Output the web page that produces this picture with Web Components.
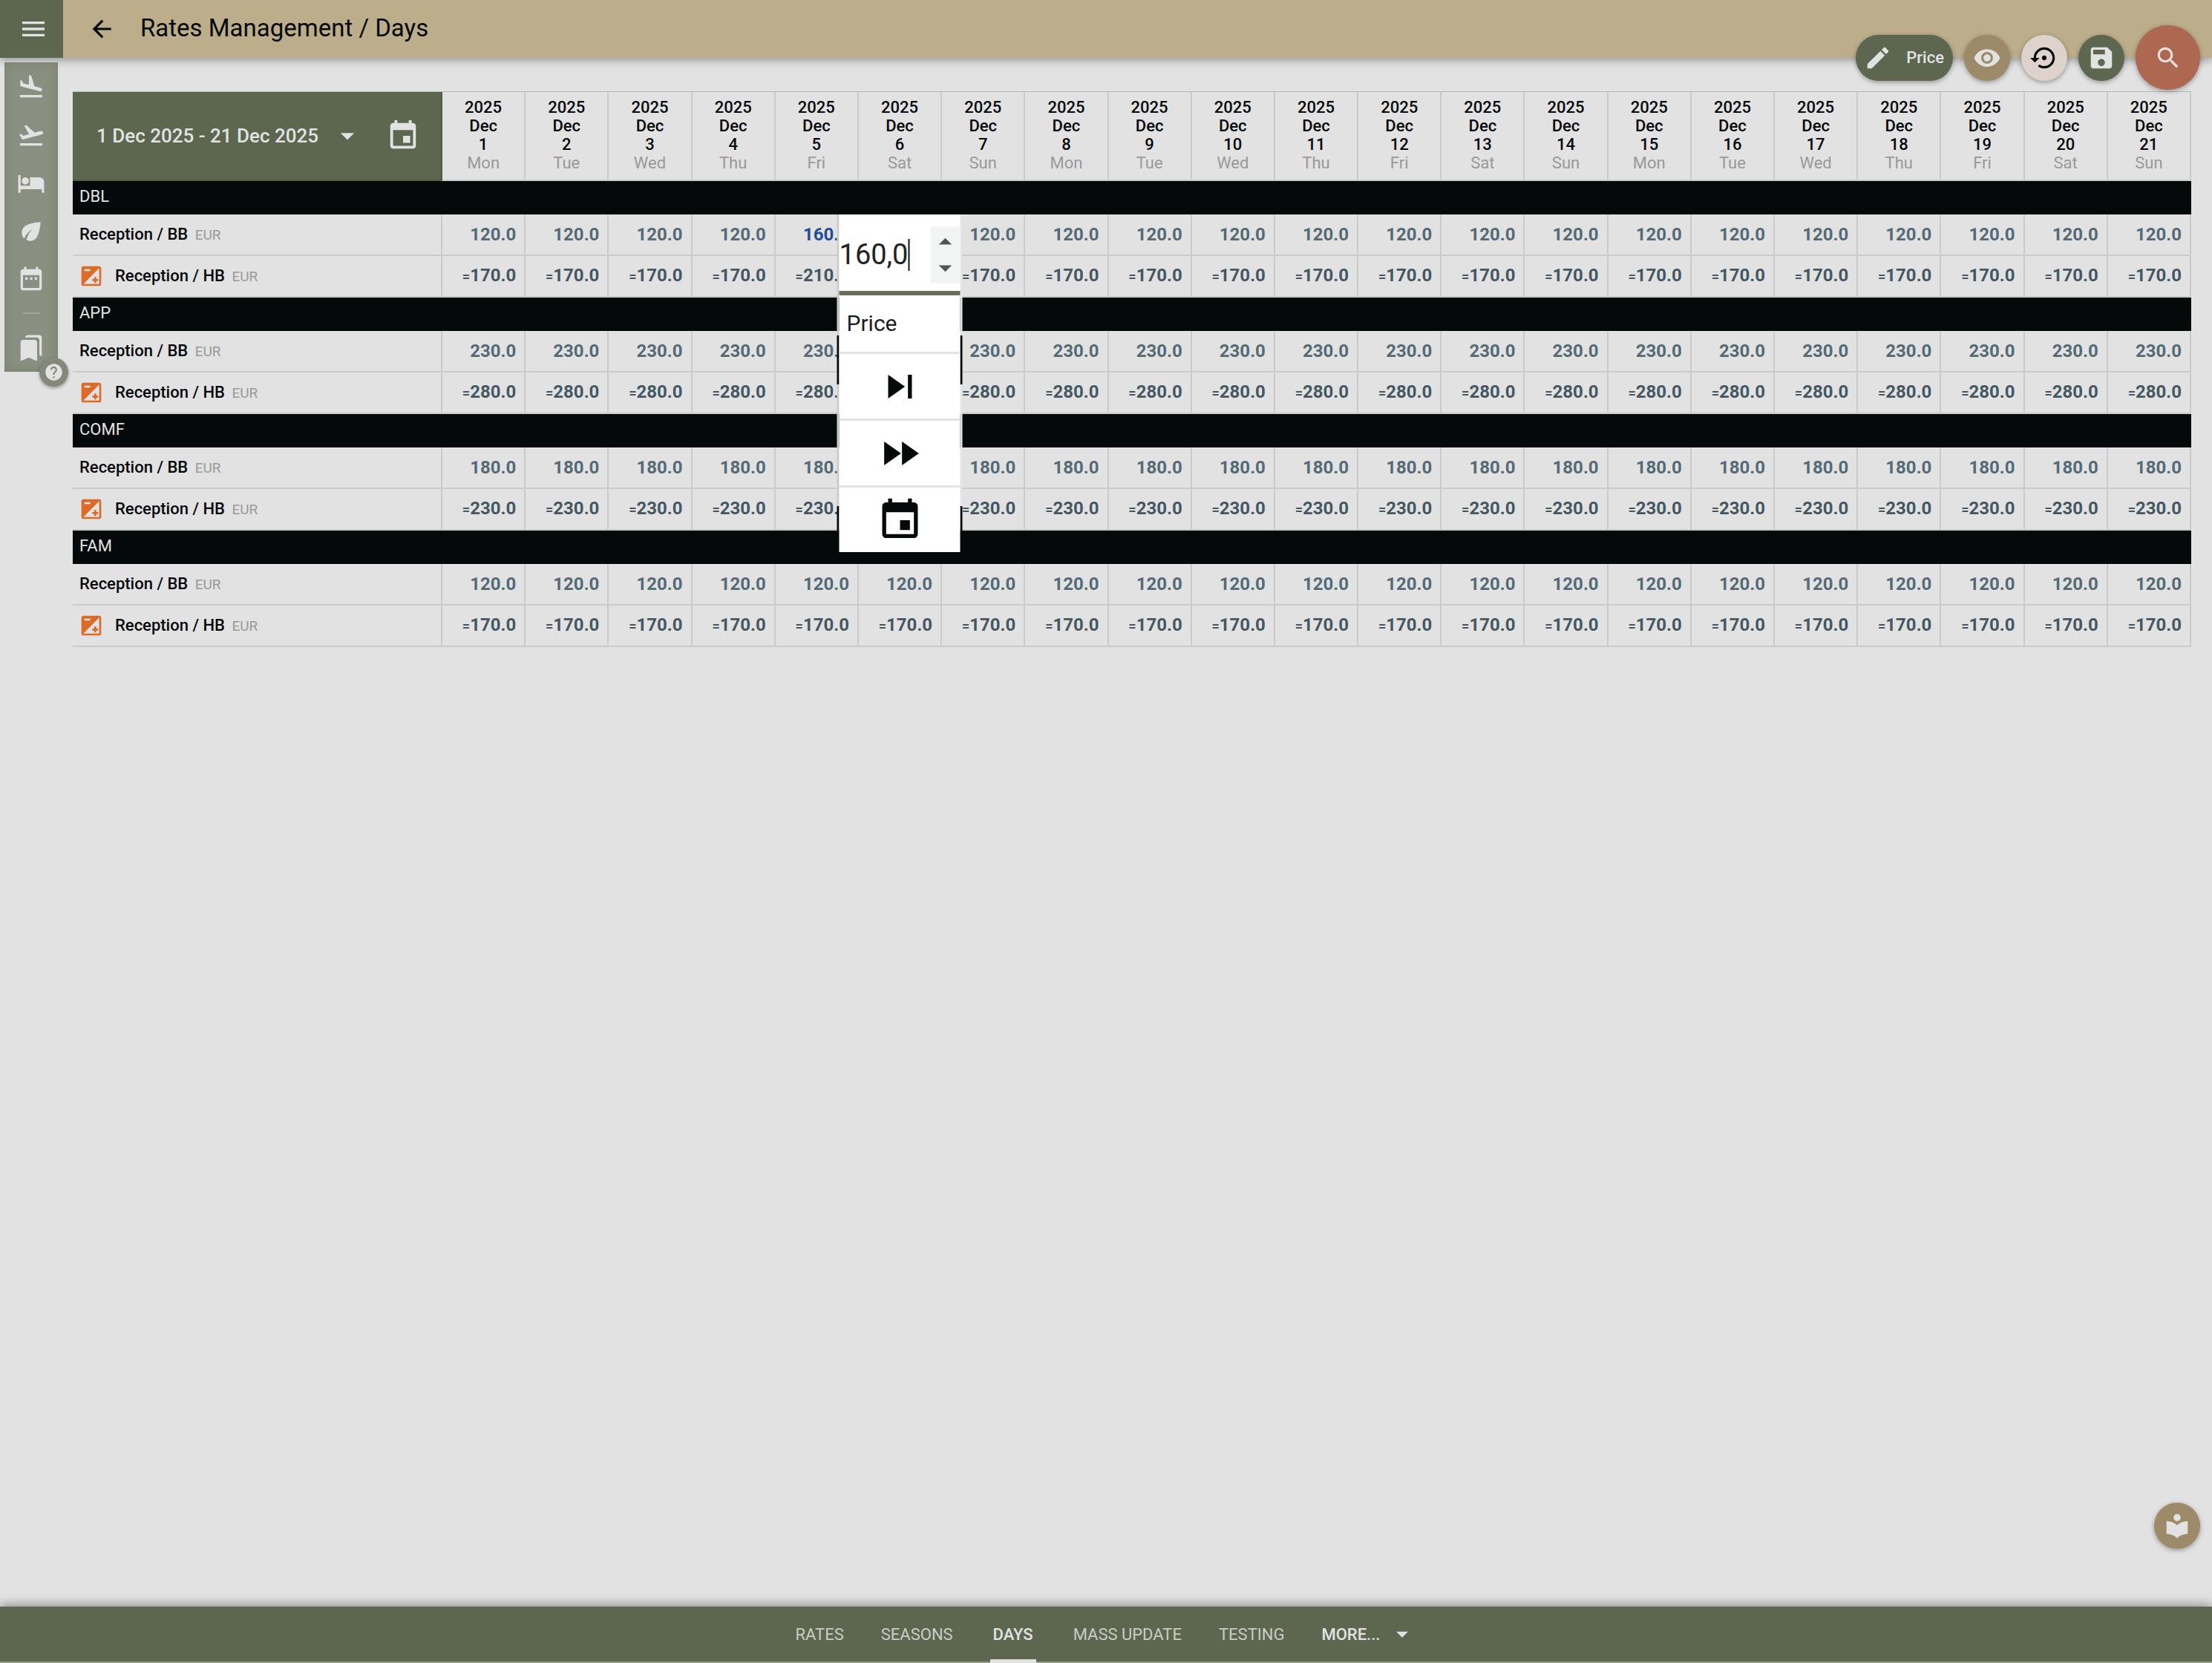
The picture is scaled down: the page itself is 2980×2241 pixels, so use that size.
<!DOCTYPE html>
<html lang="en">
<head>
<meta charset="utf-8">
<title>Rates Management / Days</title>
<style>
    html, body {
        margin: 0;
        min-height: 100vh;
    }
    body {
        font-family: Roboto, "Liberation Sans", sans-serif;
        font-size: 22px;
        background: #e2e2e2;
        color: #050909;
        --green: #5d6750;
        --sand: #bcad8b;
        --brown: #9c8a68;
        --light: #e2e2e2;
        --line: #cacccb;
    }
</style>
</head>
<body>
<rates-page></rates-page>

<script>
const ICONS = {
    menu: "M3 18h18v-2H3v2zm0-5h18v-2H3v2zm0-7v2h18V6H3z",
    back: "M20 11v2H8l5.5 5.5-1.42 1.42L4.16 12l7.92-7.92L13.5 5.5 8 11h12z",
    landing: "M2.5 19h19v2h-19zm7.18-5.73l4.35 1.16 5.31 1.42c.8.21 1.62-.26 1.84-1.06.21-.8-.26-1.62-1.06-1.84l-5.31-1.42-2.76-9.02L10.12 2v8.28L5.15 8.95l-.93-2.32-1.45-.39v5.17l1.6.43 5.31 1.43z",
    takeoff: "M2.5 19h19v2h-19zm19.57-9.36c-.21-.8-1.04-1.28-1.84-1.06L14.92 10l-6.9-6.43-1.93.51 4.14 7.17-4.97 1.33-1.97-1.54-1.45.39 1.82 3.16.77 1.33 1.6-.43 5.31-1.42 4.35-1.16L21 11.49c.81-.23 1.28-1.05 1.07-1.85z",
    bed: "M7 13c1.66 0 3-1.34 3-3S8.66 7 7 7s-3 1.34-3 3 1.34 3 3 3zm12-6h-8v7H3V5H1v15h2v-3h18v3h2v-9c0-2.21-1.79-4-4-4z",
    leaf: "M6.05 8.05c-2.73 2.73-2.73 7.15-.02 9.88 1.47-3.4 4.09-6.24 7.36-7.93-2.77 2.34-4.71 5.61-5.39 9.32 2.6 1.23 5.8.78 7.95-1.37C19.43 14.47 20 4 20 4S9.53 4.57 6.05 8.05z",
    dates: "M9 10v2H7v-2h2m4 0v2h-2v-2h2m4 0v2h-2v-2h2m2-7c1.11 0 2 .9 2 2v14c0 1.1-.89 2-2 2H5c-1.1 0-2-.9-2-2V5c0-1.1.9-2 2-2h1V1h2v2h8V1h2v2h1m0 16V8H5v11h14z",
    bookmarks: "M19 18l2 1V3c0-1.1-.9-2-2-2H8.990C7.890 1 7 1.900 7 3h10c1.100 0 2 .9 2 2v13zM15 5H5c-1.100 0-2 .9-2 2v16l7-3 7 3V7c0-1.100-.9-2-2-2z",
    help: "M12 2C6.480 2 2 6.480 2 12s4.480 10 10 10 10-4.480 10-10S17.520 2 12 2zm1 17h-2v-2h2v2zm2.070-7.750l-.9.920C13.450 12.900 13 13.500 13 15h-2v-.5c0-1.100.45-2.100 1.170-2.830l1.240-1.260c.37-.36.59-.86.59-1.410 0-1.100-.9-2-2-2s-2 .9-2 2H8c0-2.210 1.790-4 4-4s4 1.790 4 4c0 .88-.36 1.680-.93 2.250z",
    pencil: "M3 17.250V21h3.750L17.810 9.940l-3.750-3.750L3 17.250zM20.710 7.040c.39-.39.39-1.020 0-1.410l-2.340-2.340c-.39-.39-1.020-.39-1.410 0l-1.830 1.830 3.750 3.750 1.830-1.830z",
    eye: "M12 4.500C7 4.500 2.730 7.610 1 12c1.730 4.390 6 7.500 11 7.500s9.270-3.110 11-7.500c-1.730-4.390-6-7.500-11-7.500zM12 17c-2.760 0-5-2.240-5-5s2.240-5 5-5 5 2.240 5 5-2.240 5-5 5zm0-8c-1.660 0-3 1.340-3 3s1.340 3 3 3 3-1.340 3-3-1.340-3-3-3z",
    restore: "M14 12c0-1.100-.9-2-2-2s-2 .9-2 2 .9 2 2 2 2-.9 2-2zm-2-9c-4.970 0-9 4.030-9 9H0l4 4 4-4H5c0-3.870 3.130-7 7-7s7 3.130 7 7-3.130 7-7 7c-1.510 0-2.910-.49-4.060-1.300l-1.420 1.440C8.040 20.300 9.940 21 12 21c4.970 0 9-4.030 9-9s-4.030-9-9-9z",
    save: "M17 3H5c-1.110 0-2 .9-2 2v14c0 1.100.89 2 2 2h14c1.100 0 2-.9 2-2V7l-4-4zm-5 16c-1.660 0-3-1.340-3-3s1.340-3 3-3 3 1.340 3 3-1.340 3-3 3zm3-10H5V5h10v4z",
    search: "M15.500 14h-.79l-.28-.27C15.410 12.590 16 11.110 16 9.500 16 5.910 13.090 3 9.500 3S3 5.910 3 9.500 5.910 16 9.500 16c1.610 0 3.090-.59 4.230-1.570l.27.28v.79l5 4.990L20.490 19l-4.990-5zm-6 0C7.010 14 5 11.990 5 9.500S7.010 5 9.500 5 14 7.010 14 9.500 11.990 14 9.500 14z",
    caret: "M7 10l5 5 5-5z",
    caretUp: "M7 14l5-5 5 5z",
    event: "M17 12h-5v5h5v-5zM16 1v2H8V1H6v2H5c-1.110 0-1.990.9-1.990 2L3 19c0 1.100.89 2 2 2h14c1.100 0 2-.9 2-2V5c0-1.100-.9-2-2-2h-1V1h-2zm3 18H5V8h14v11z",
    next: "M6 18l8.500-6L6 6v12zM16 6v12h2V6h-2z",
    forward: "M4 18l8.500-6L4 6v12zm9-12v12l8.500-6L13 6z",
    exposure: "M15 17v2h2v-2h2v-2h-2v-2h-2v2h-2v2h2zm5-15H4c-1.100 0-2 .9-2 2v16c0 1.100.9 2 2 2h16c1.100 0 2-.9 2-2V4c0-1.100-.9-2-2-2zM5 5h6v2H5V5zm15 15H4L20 4v16z",
    library: "M12 11.550C9.640 9.350 6.480 8 3 8v11c3.480 0 6.640 1.350 9 3.550 2.360-2.190 5.520-3.550 9-3.550V8c-3.480 0-6.640 1.350-9 3.550zM12 8c1.660 0 3-1.340 3-3s-1.340-3-3-3-3 1.340-3 3 1.340 3 3 3z"
}

class MdIcon extends HTMLElement {
    connectedCallback() {
        const size = this.getAttribute("size") || 38;
        this.attachShadow({ mode: "open" });
        this.shadowRoot.innerHTML = `
<style>
    :host { display: inline-flex; flex: none; }
    svg { display: block; fill: currentColor; }
</style>
<svg width="${size}" height="${size}" viewBox="0 0 24 24" aria-hidden="true"><path d="${ICONS[this.getAttribute("name")]}"/></svg>`;
    }
}
customElements.define("md-icon", MdIcon);

class RoundButton extends HTMLElement {
    connectedCallback() {
        this.attachShadow({ mode: "open" });
        this.shadowRoot.innerHTML = `
<style>
    :host { display: inline-flex; flex: none; }
    button {
        display: flex;
        align-items: center;
        justify-content: center;
        min-width: var(--button-size, 62px);
        height: var(--button-size, 62px);
        padding: var(--button-padding, 0);
        border: 0;
        border-radius: 44px;
        gap: 19px;
        font: 500 22px Roboto, "Liberation Sans", sans-serif;
        background: var(--button-color, var(--green));
        color: var(--button-text, var(--light));
        box-shadow: 0 2px 6px rgba(0, 0, 0, .35);
    }
</style>
<button type="button" aria-label="${this.getAttribute("label")}"><slot></slot></button>`;
    }
}
customElements.define("round-button", RoundButton);

class AppHeader extends HTMLElement {
    connectedCallback() {
        this.attachShadow({ mode: "open" });
        this.shadowRoot.innerHTML = `
<style>
    :host {
        display: flex;
        align-items: center;
        position: relative;
        height: 78px;
        background: var(--sand);
        box-shadow: 0 2px 12px rgba(0, 0, 0, .4);
    }
    button {
        display: flex;
        align-items: center;
        justify-content: center;
        border: 0;
        padding: 0;
        background: none;
        color: inherit;
    }
    .menu {
        width: 85px;
        height: 78px;
        padding-left: 4px;
        background: var(--green);
        color: var(--light);
    }
    .back { margin: 0 33px; }
    h1 {
        margin: 0;
        font-size: 33px;
        font-weight: 400;
        line-height: 76px;
        padding-bottom: 2px;
    }
</style>
<button class="menu" type="button" aria-label="Menu"><md-icon name="menu" size="40"></md-icon></button>
<button class="back" type="button" aria-label="Back"><md-icon name="back" size="38"></md-icon></button>
<h1><slot></slot></h1>`;
    }
}
customElements.define("app-header", AppHeader);

class SideRail extends HTMLElement {
    connectedCallback() {
        const link = (icon, label) => `<a href="#${icon}" aria-label="${label}"><md-icon name="${icon}" size="38"></md-icon></a>`;
        this.attachShadow({ mode: "open" });
        this.shadowRoot.innerHTML = `
<style>
    :host { display: block; position: relative; flex: none; width: 72px; }
    nav {
        display: flex;
        flex-direction: column;
        background: #8a9081;
        box-shadow: inset 0 0 14px rgba(60, 60, 40, .2);
    }
    a {
        display: flex;
        align-items: center;
        justify-content: center;
        height: 65px;
        color: var(--light);
    }
    hr {
        width: 22px;
        margin: 12px auto 13px;
        border: 0;
        border-top: 2px solid #a3a89c;
    }
    .help {
        position: absolute;
        right: -14px;
        bottom: -20px;
        width: 39px;
        height: 39px;
        display: flex;
        align-items: center;
        justify-content: center;
        padding: 0;
        border: 0;
        border-radius: 50%;
        background: #84897a;
        color: var(--light);
        box-shadow: 0 2px 4px rgba(0, 0, 0, .35);
    }
</style>
<nav>
    ${link("landing", "Arrivals")}
    ${link("takeoff", "Departures")}
    ${link("bed", "Rooms")}
    ${link("leaf", "Housekeeping")}
    ${link("dates", "Calendar")}
    <hr>
    ${link("bookmarks", "Bookmarks")}
</nav>
<button class="help" type="button" aria-label="Help"><md-icon name="help" size="27"></md-icon></button>`;
    }
}
customElements.define("side-rail", SideRail);

class PriceEditor extends HTMLElement {
    connectedCallback() {
        this.attachShadow({ mode: "open" });
        this.shadowRoot.innerHTML = `
<style>
    :host {
        display: block;
        box-sizing: border-box;
        width: 169px;
        padding: 0 3px;
        font-weight: 400;
        background:
            linear-gradient(#ccc 163px, #050909 163px 229px, #ccc 229px 393px, #050909 393px) left / 3px 100% no-repeat,
            linear-gradient(#e3e4e5 163px, #050909 163px 229px, #e3e4e5 229px 393px, #050909 393px) right / 3px 100% no-repeat;
    }
    .panel { background: #fff; }
    .field {
        display: flex;
        align-items: center;
        box-sizing: border-box;
        height: 109px;
        padding-top: 5px;
        border-bottom: 6px solid #666f55;
    }
    .text {
        display: flex;
        align-items: center;
        flex: 1;
    }
    input {
        width: 93px;
        padding: 0;
        border: 0;
        outline: 0;
        background: none;
        font: 400 38px Roboto, "Liberation Sans", sans-serif;
        color: #222;
    }
    .caret { width: 2px; height: 43px; background: #111; }
    .spin {
        display: flex;
        flex-direction: column;
        justify-content: center;
        width: 40px;
        height: 77px;
        background: #f3f5f5;
    }
    .spin button { padding: 0; color: #555; height: 35px; }
    button {
        display: flex;
        align-items: center;
        justify-content: center;
        width: 100%;
        height: 90px;
        border: 0;
        background: none;
        color: #050909;
    }
    .panel > button { border-top: 3px solid #e1e3e5; }
    label {
        display: flex;
        align-items: center;
        height: 76px;
        padding-left: 10px;
        font-size: 30px;
        color: #1d1d1d;
    }
</style>
<div class="panel">
    <div class="field">
        <div class="text"><input id="price" value="160,0"><span class="caret"></span></div>
        <div class="spin">
            <button type="button" aria-label="Increase"><md-icon name="caretUp" size="42"></md-icon></button>
            <button type="button" aria-label="Decrease"><md-icon name="caret" size="42"></md-icon></button>
        </div>
    </div>
    <label for="price">Price</label>
    <button type="button" aria-label="Apply to next day"><md-icon name="next" size="64"></md-icon></button>
    <button type="button" aria-label="Apply to all following days"><md-icon name="forward" size="64"></md-icon></button>
    <button type="button" aria-label="Apply to period"><md-icon name="event" size="64"></md-icon></button>
</div>`;
    }
}
customElements.define("price-editor", PriceEditor);

class RatesGrid extends HTMLElement {

    constructor() {
        super();
        this.weekdays = ["Mon", "Tue", "Wed", "Thu", "Fri", "Sat", "Sun"];
        this.days = 21;
        this.rooms = [
            { name: "DBL", bb: 120, hb: 170, changed: { 4: [160, 210], 5: [160, 210] } },
            { name: "APP", bb: 230, hb: 280 },
            { name: "COMF", bb: 180, hb: 230 },
            { name: "FAM", bb: 120, hb: 170 }
        ]
    }

    cells(draw) {
        let html = "";
        for (let i = 0; i < this.days; i++) {
            html += draw(i);
        }
        return html;
    }

    room(room) {
        const changed = room.changed || {};
        return `
<tr class="room"><th colspan="${this.days + 1}" scope="rowgroup">${room.name}</th></tr>
<tr>
    <th scope="row">Reception / BB <small>EUR</small></th>
    ${this.cells(i => {
        if (changed[i] && i == 5) {
            return `<td class="editing"><price-editor></price-editor></td>`;
        }
        return changed[i] ? `<td class="changed">${changed[i][0]}.0</td>` : `<td>${room.bb}.0</td>`;
    })}
</tr>
<tr class="derived">
    <th scope="row"><div><md-icon name="exposure" size="32"></md-icon><span>Reception / HB <small>EUR</small></span></div></th>
    ${this.cells(i => `<td><i>=</i>${changed[i] ? changed[i][1] : room.hb}.0</td>`)}
</tr>`;
    }

    connectedCallback() {
        this.attachShadow({ mode: "open" });
        this.shadowRoot.innerHTML = `
<style>
    :host { display: block; }
    table {
        width: 100%;
        table-layout: fixed;
        border-spacing: 0;
        border-top: 1px solid #b8b8b8;
    }
    th, td {
        box-sizing: border-box;
        height: 56px;
        padding: 0 11px 0 9px;
        border-right: 2px solid var(--line);
        border-bottom: 2px solid var(--line);
        line-height: 26px;
    }
    th { text-align: left; font-weight: 500; }
    td {
        position: relative;
        text-align: right;
        font-size: 24px;
        font-weight: 700;
        color: #546b76;
    }
    thead th {
        height: 120px;
        padding: 0 0 3px;
        line-height: 25px;
        text-align: center;
    }
    thead th span { display: block; }
    thead th .weekday { font-weight: 400; color: #999; }
    thead .period {
        width: 498px;
        padding: 0 28px 0 32px;
        background: var(--green);
        color: var(--light);
        border-color: #525b47;
    }
    .period div { display: flex; align-items: center; justify-content: space-between; }
    .period button {
        display: flex;
        align-items: center;
        gap: 17px;
        padding: 0;
        border: 0;
        background: none;
        color: inherit;
        font: 500 26px Roboto, "Liberation Sans", sans-serif;
    }
    .room th {
        height: 45px;
        padding-bottom: 4px;
        border: 0;
        background: #050909;
        color: var(--light);
        font-weight: 400;
    }
    small { margin-left: 4px; font-size: 19px; font-weight: 400; color: #999; }
    .changed { color: #244a97; }
    .derived td { color: #455862; }
    .derived i { font-style: normal; font-size: 18px; }
    .derived div { display: flex; align-items: center; gap: 16px; }
    .derived md-icon { color: #dc6a28; }
    price-editor {
        position: absolute;
        top: 0;
        left: 50%;
        transform: translateX(-50%);
        z-index: 2;
    }
</style>
<table>
    <thead>
        <tr>
            <th class="period" scope="col"><div>
                <button type="button">1 Dec 2025 - 21 Dec 2025 <md-icon name="caret" size="44"></md-icon></button>
                <button type="button" aria-label="Pick dates"><md-icon name="event" size="46"></md-icon></button>
            </div></th>
            ${this.cells(i => `<th scope="col"><span>2025</span><span>Dec</span><span>${i + 1}</span><span class="weekday">${this.weekdays[i % 7]}</span></th>`)}
        </tr>
    </thead>
    <tbody>${this.rooms.map(r => this.room(r)).join("")}</tbody>
</table>`;
    }
}
customElements.define("rates-grid", RatesGrid);

class BottomTabs extends HTMLElement {
    connectedCallback() {
        this.attachShadow({ mode: "open" });
        this.shadowRoot.innerHTML = `
<style>
    :host {
        display: block;
        background: var(--green);
        box-shadow: 0 -2px 14px rgba(0, 0, 0, .4);
    }
    nav {
        display: flex;
        justify-content: center;
        gap: 50px;
        height: 76px;
        box-sizing: border-box;
        border-bottom: 2px solid #989b88;
    }
    a, button {
        display: flex;
        align-items: center;
        justify-content: center;
        min-width: 62px;
        padding: 0;
        border: 0;
        background: none;
        color: #c9ccc5;
        font: 400 22px Roboto, "Liberation Sans", sans-serif;
        text-decoration: none;
    }
    .active {
        box-sizing: border-box;
        height: 76px;
        padding-top: 3px;
        border-bottom: 5px solid var(--light);
    }
    .active, button { color: var(--light); font-weight: 500; }
    button { gap: 11px; }
</style>
<nav>
    <a href="#rates">RATES</a>
    <a href="#seasons">SEASONS</a>
    <a href="#days" class="active" aria-current="page">DAYS</a>
    <a href="#mass-update">MASS UPDATE</a>
    <a href="#testing">TESTING</a>
    <button type="button">MORE... <md-icon name="caret" size="38"></md-icon></button>
</nav>`;
    }
}
customElements.define("bottom-tabs", BottomTabs);

class RatesPage extends HTMLElement {
    connectedCallback() {
        this.attachShadow({ mode: "open" });
        this.shadowRoot.innerHTML = `
<style>
    :host {
        display: flex;
        flex-direction: column;
        position: relative;
        min-height: 100vh;
    }
    main { display: flex; flex: 1; align-items: flex-start; padding: 0 28px 0 6px; }
    side-rail { margin-top: 6px; }
    rates-grid { flex: 1; min-width: 0; margin: 45px 0 0 20px; }
    .actions {
        position: absolute;
        top: 34px;
        right: 16px;
        display: flex;
        align-items: center;
        gap: 15px;
    }
    .edit { --button-padding: 0 12px 0 11px; }
    .brown { --button-color: var(--brown); }
    .reset { --button-color: #ddd3cc; --button-text: #050909; }
    .search { --button-color: #ae6750; --button-size: 87px; }
    .library { position: absolute; right: 16px; bottom: 154px; }
</style>
<app-header>Rates Management / Days</app-header>
<main>
    <side-rail></side-rail>
    <rates-grid></rates-grid>
</main>
<div class="actions">
    <round-button class="edit" label="Price"><md-icon name="pencil" size="38"></md-icon>Price</round-button>
    <round-button class="brown" label="Show"><md-icon name="eye" size="38"></md-icon></round-button>
    <round-button class="reset" label="Restore"><md-icon name="restore" size="38"></md-icon></round-button>
    <round-button label="Save"><md-icon name="save" size="38"></md-icon></round-button>
    <round-button class="search" label="Search"><md-icon name="search" size="38"></md-icon></round-button>
</div>
<round-button class="brown library" label="Guide"><md-icon name="library" size="38"></md-icon></round-button>
<bottom-tabs></bottom-tabs>`;
    }
}
customElements.define("rates-page", RatesPage);
</script>
</body>
</html>
